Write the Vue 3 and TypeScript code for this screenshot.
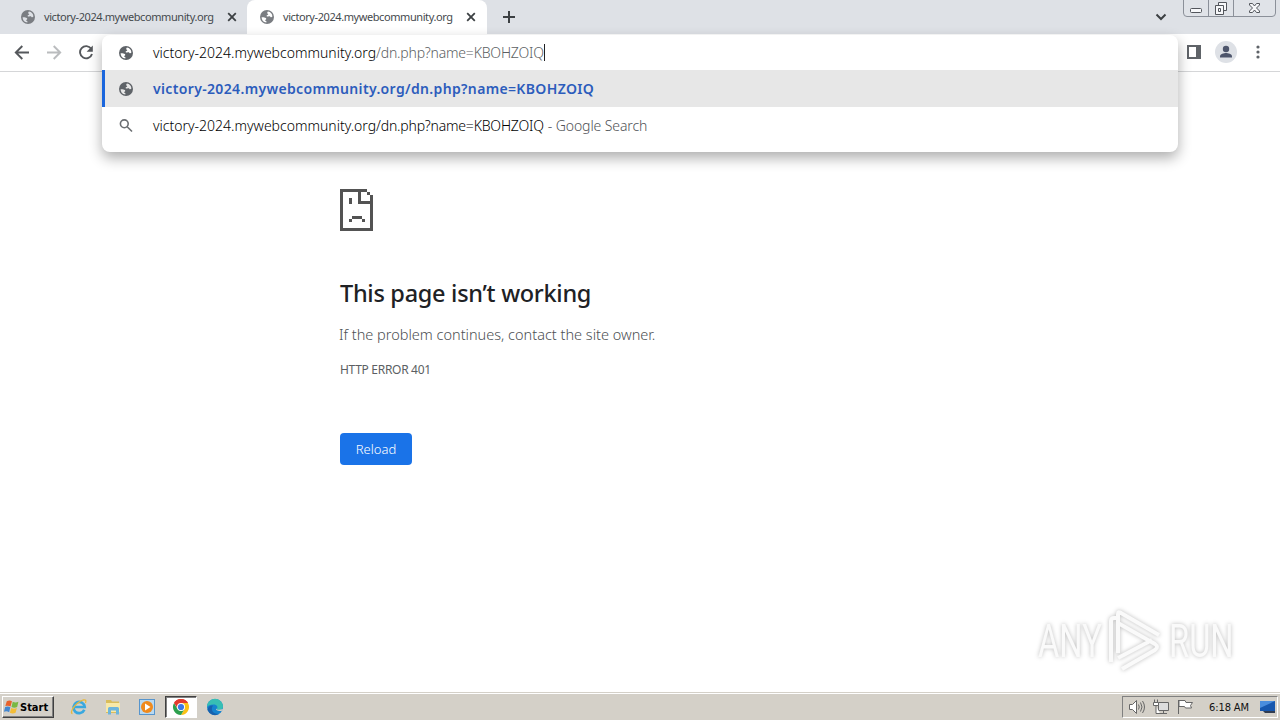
<script setup lang="ts">
interface Tab { title: string; active: boolean }
const tabs: Tab[] = [
  { title: 'victory-2024.mywebcommunity.org', active: false },
  { title: 'victory-2024.mywebcommunity.org', active: true },
]
const host = 'victory-2024.mywebcommunity.org'
const path = '/dn.php?name=KBOHZOIQ'
const globe =
  'M8 1a7 7 0 1 0 0 14A7 7 0 0 0 8 1zM2.6 8.2c1.6-.1 3.3 0 4.2.8.8.7.5 1.500-.2 1.700-.8.2-.4 1.100.3 1.300.8.2.7 1 .4 1.500A5.500 5.500 0 0 1 2.600 8.200zM9 2.600a5.500 5.500 0 0 1 4.400 5c-.8.9-1.700.8-2.100.1-.4-.8-1.300-.4-2.100-.2-1 .3-1.900-.2-1.500-1 .3-.7 1.200-.4 1.500-1.100.2-.6-1-.5-1-1.400 0-.6.4-1.100.8-1.400z'
</script>

<template>
  <div class="screen">
    <header class="tabs">
      <div v-for="(tab, i) in tabs" :key="i" class="tab" :class="{ active: tab.active }">
        <svg class="globe" viewBox="0 0 16 16"><path :d="globe" fill-rule="evenodd" /></svg>
        <span class="tab-title">{{ tab.title }}</span>
        <svg class="close" viewBox="0 0 10 10"><path d="M1.200 1.200l7.600 7.600M8.800 1.200L1.200 8.800" /></svg>
      </div>
      <svg class="plus" viewBox="0 0 12 12"><path d="M6 0v12M0 6h12" /></svg>
      <svg class="chevron" viewBox="0 0 12 8"><path d="M1.500 1.500L6 6l4.500-4.500" /></svg>
      <svg class="winctl" viewBox="0 0 94 18">
        <path class="frame" d="M.5 0v13q0 3.500 3.500 3.500h85q3.500 0 3.500-3.500V0M25.500 0v16.500M50.500 0v16.500" />
        <rect class="glyph" x="7.500" y="8.500" width="11" height="4" rx="1" />
        <path class="glyph" d="M35.500 5.500v-3h8v8h-3M32.500 5.500h8v9h-8zM35.500 8.500h2v3h-2z" />
        <path class="glyph" d="M66.500 3.500h3l2 2.500 2-2.500h3v1.500l-3 3 3 3v1.500h-3l-2-2.500-2 2.500h-3v-1.500l3-3-3-3z" />
      </svg>
    </header>

    <nav class="toolbar">
      <svg class="nav" viewBox="0 0 16 16"><path d="M15 7.500H2M8.300 1L1.800 7.500l6.500 6.500" /></svg>
      <svg class="nav off" viewBox="0 0 16 16"><path d="M1 7.500h13M7.700 1L14.200 7.500l-6.500 6.500" /></svg>
      <svg class="nav" viewBox="0 0 16 16">
        <path d="M13.200 3.800A6.100 6.100 0 1 0 14 9" /><path class="tip" d="M14.800.500v6.200H8.600z" />
      </svg>
      <div class="right">
        <svg class="panel" viewBox="0 0 14 14"><path fill-rule="evenodd" d="M0 0h14v14H0zM2 2v10h7V2z" /></svg>
        <svg class="avatar" viewBox="0 0 22 22">
          <circle cx="11" cy="11" r="11" fill="#dee1e6" />
          <circle cx="11" cy="8" r="3.200" fill="#4e566c" />
          <path d="M5 16.500v-1.300c0-2.200 4-3.200 6-3.200s6 1 6 3.200v1.300z" fill="#4e566c" />
        </svg>
        <svg class="dots" viewBox="0 0 4 14"><circle cx="2" cy="2" r="1.600" /><circle cx="2" cy="7" r="1.600" /><circle cx="2" cy="12" r="1.600" /></svg>
      </div>
    </nav>

    <main class="page">
      <svg class="sad" viewBox="0 0 33 42">
        <path d="M0 0h27v3H3v36h27V15H18V3h3v9h9V6h3v36H0zM27 3h3v3h-3zM9 9h3v6H9zM12 27h10v3H12zM9 30h3v3H9zM22 30h3v3h-3z" />
      </svg>
      <h1>This page isn’t working</h1>
      <p class="msg">If the problem continues, contact the site owner.</p>
      <p class="code">HTTP ERROR 401</p>
      <button class="reload">Reload</button>
    </main>

    <section class="omnibox">
      <div class="row input">
        <svg class="globe" viewBox="0 0 16 16"><path :d="globe" fill-rule="evenodd" /></svg>
        <span class="url">{{ host }}<span class="dim">{{ path }}</span></span><i class="caret"></i>
      </div>
      <div class="row selected">
        <svg class="globe" viewBox="0 0 16 16"><path :d="globe" fill-rule="evenodd" /></svg>
        <span class="url bold">{{ host }}{{ path }}</span>
      </div>
      <div class="row search">
        <svg class="globe lens" viewBox="0 0 16 16"><circle cx="6.300" cy="5.800" r="3.900" /><path d="M9.200 8.700l4.800 4.800" /></svg>
        <span class="url">{{ host }}<span class="tail">{{ path }}</span></span><span class="suffix">- Google Search</span>
      </div>
    </section>

    <div class="watermark">
      <span class="any">ANY</span>
      <svg class="play" viewBox="0 0 58 64">
        <path d="M4 53V12q0-3 3-3h2M11 44V5q0-3 3-1l38 22M11 14l37 21q4 3 0 6L15 60M11 49l34-18" />
      </svg>
      <span class="run">RUN</span>
    </div>

    <footer class="taskbar">
      <div class="start">
        <svg viewBox="0 0 18 16">
          <path d="M4 2q3-2 5.500 0L8 7.500Q5.500 6 2.500 7z" fill="#e8622c" />
          <path d="M10.300 2.500q3 1.700 6 0L15 8q-3 1.600-6 0z" fill="#79b844" />
          <path d="M2.300 8q3-1.400 5.500.300L6.500 13.500Q4 12 1 13z" fill="#4387d0" />
          <path d="M8.700 9q3 1.500 6 0l-1.400 5q-3 1.600-6 0z" fill="#f3bd37" />
        </svg>
        <b>Start</b>
      </div>
      <div class="apps">
        <span class="app">
          <svg viewBox="0 0 18 18">
            <path d="M14.300 11.700A5.600 5.600 0 1 1 14.700 9H5" fill="none" stroke="#39a8df" stroke-width="2.700" />
            <path d="M2.500 15.500C-1 15 5 5 13 2q4-1 2.500 3" fill="none" stroke="#e7b83c" stroke-width="1.300" />
          </svg>
        </span>
        <span class="app">
          <svg viewBox="0 0 18 18">
            <path d="M2 2h5l1 1.500h7V15H2z" fill="#d9bd5c" /><path d="M2 5h14v9H2z" fill="#f8e9a8" />
            <path d="M4 16.500v-6q0-1.500 1.500-1.500h8q1.500 0 1.500 1.500v6h-3v-4H7v4z" fill="#6db5dc" />
          </svg>
        </span>
        <span class="app">
          <svg viewBox="0 0 18 18">
            <rect x="1.500" y="1.500" width="15" height="15" fill="#b9d9f1" stroke="#5795cd" />
            <circle cx="9" cy="9" r="6" fill="#f08a1d" /><path d="M7 5.500v7L12.500 9z" fill="#fff" />
          </svg>
        </span>
        <span class="app pressed">
          <svg viewBox="0 0 18 18">
            <path d="M9 9L2.070 5A8 8 0 0 1 15.930 5z" fill="#e33b2e" />
            <path d="M9 9V1l6.930 4A8 8 0 0 1 9 17l3.500-6z" fill="#fbc116" />
            <path d="M9 9l3.500 2L9 17A8 8 0 0 1 2.070 5l3.500 6z" fill="#2da04e" />
            <path d="M9 5h6.930A8 8 0 0 0 2.070 5L6 11z" fill="#e33b2e" />
            <circle cx="9" cy="9" r="4" fill="#fff" /><circle cx="9" cy="9" r="3.100" fill="#3b78e7" />
          </svg>
        </span>
        <span class="app">
          <svg viewBox="0 0 18 18">
            <circle cx="9" cy="9" r="8" fill="#1583cf" />
            <path d="M1 9a8 8 0 0 1 16-.500c0 3-3.500 4-6.500 3 2-2.500.5-5-3-5C4 6.500 2 7.500 1 9z" fill="#37bfb4" />
            <path d="M7 7.500c-3 4 0 9 6 8.500A8 8 0 0 1 1.500 12C2 9 4 7 7 7.500z" fill="#1761ad" />
            <path d="M10 10.500c-.5 2 2.500 3 6 2.300L17.200 11l-4 .8c-1.500.2-2.500-.3-3.200-1.300z" fill="#d4d0c8" />
          </svg>
        </span>
      </div>
      <div class="tray">
        <svg viewBox="0 0 18 16" class="line">
          <path d="M.5 5.500h3l4-4v13l-4-4h-3z" fill="#fff" /><path d="M9.500 5.500q1.500 2.500 0 5M11.500 3.500q3 4.500 0 9M13.500 2q4 6 0 12" />
        </svg>
        <svg viewBox="0 0 18 16" class="line">
          <path d="M5.500 3.500h10v8h-10zM7 14.500h7M10.500 12v2" fill="#ddd" /><path d="M.5 3.500h5v3h-5zM1.500 3V.500M4.500 3V.500M3 7v7.500h4" fill="#fff" />
        </svg>
        <svg viewBox="0 0 18 16" class="line">
          <path d="M1.500 15V1M2 1.500h6l1 2h6.500l-2 3 1 2.500H8.500L7.500 7.500H2z" fill="#fff" />
        </svg>
        <time>6:18 AM</time>
        <svg viewBox="0 0 18 16" class="monitor">
          <path d="M1 2h15v10H1z" fill="#1757ae" /><path d="M1 2h15L1 9z" fill="#4a8ddd" /><path d="M4 12h12v2H6z" fill="#303c50" />
        </svg>
      </div>
    </footer>
  </div>
</template>

<style>
body { margin: 0; overflow: hidden; }
</style>

<style scoped>
.screen { position: relative; width: 1280px; height: 720px; display: flex; flex-direction: column; background: #fff; font-family: "Noto Sans", "Open Sans", sans-serif; overflow: hidden; }
svg { display: block; flex: none; }
.tabs { height: 34px; flex: none; background: #dee1e6; display: flex; align-items: center; }
.tab { box-sizing: border-box; height: 34px; display: flex; align-items: center; width: 239px; padding: 0 0 0 12px; border-radius: 8px 8px 0 0; }
.tab:first-child { width: 247px; padding-left: 20px; }
.tab.active { background: #fff; width: 240px; }
.globe { width: 16px; height: 16px; fill: #5f6368; }
.tab .globe { fill: #7a7d82; }
.tab-title { width: 176px; margin-left: 8px; margin-top: -2px; font-size: 11px; letter-spacing: -0.42px; color: #45494d; white-space: nowrap; }
.close { width: 10px; height: 10px; margin-left: 7px; stroke: #3c4043; stroke-width: 1.8; }
.plus { width: 12px; height: 12px; margin-left: 16px; stroke: #3c4043; stroke-width: 2; }
.chevron { width: 12px; height: 8px; margin-left: 640px; fill: none; stroke: #3c4043; stroke-width: 2; }
.winctl { width: 94px; height: 18px; margin: 0 3px 0 auto; align-self: flex-start; fill: none; }
.frame { stroke: #8b9099; fill: #e0e3e8; }
.glyph { stroke: #53565c; fill: #f7f8fa; }
.toolbar { box-sizing: border-box; height: 38px; flex: none; display: flex; align-items: center; gap: 16px; padding-left: 14px; border-bottom: 1px solid #d5d6d8; }
.nav { width: 16px; height: 16px; fill: none; stroke: #55585c; stroke-width: 1.9; }
.nav.off { stroke: #babcbe; }
.tip { fill: #55585c; stroke: none; }
.right { display: flex; align-items: center; margin-left: auto; padding-right: 20px; margin-top: -1px; }
.panel { width: 14px; height: 14px; fill: #5f6368; }
.avatar { width: 22px; height: 22px; margin-left: 14px; }
.dots { width: 4px; height: 14px; margin-left: 19px; fill: #5f6368; }
.page { flex: 1; padding: 117px 0 0 340px; color: #5c5f63; }
.sad { width: 33px; height: 42px; fill: #535353; }
h1 { margin: 45px 0 0; font-size: 23.500px; line-height: 34px; font-weight: 500; color: #202124; letter-spacing: -0.29px; white-space: nowrap; }
.msg { margin: 14px 0 0 -1px; font-size: 14.500px; line-height: 20px; font-weight: 300; letter-spacing: 0; color: #4c4f53; white-space: nowrap; }
.code { margin: 16px 0 0; font-size: 12px; line-height: 20px; letter-spacing: -0.3px; }
.reload { display: block; margin: 53px 0 0; width: 72px; height: 32px; padding: 0; border: 0; border-radius: 4px; background: #1a73e8; color: #fff; font: 300 13px "Noto Sans", sans-serif; }
.omnibox { position: absolute; left: 102px; top: 35px; width: 1076px; height: 117px; border-radius: 8px; background: #fff; box-shadow: 0 6px 14px rgba(0,0,0,.32); overflow: hidden; }
.row { display: flex; align-items: center; box-sizing: border-box; height: 37px; padding-left: 16px; font-size: 14px; white-space: nowrap; color: #000; }
.row.input { height: 35px; }
.row.selected { background: #e7e7e7; padding-left: 13px; border-left: 3px solid #1a66dd; }
.url { margin-left: 19px; font-weight: 300; }
.dim { color: #5c5f63; }
.dim, .tail { letter-spacing: -0.2px; }
.url.bold { color: #2c5cbc; font-weight: 600; letter-spacing: 0.35px; }
.suffix { margin-left: 4px; color: #505357; font-weight: 300; letter-spacing: -0.1px; }
.caret { width: 1px; height: 17px; background: #202124; }
.lens { fill: none; stroke: #6b6e72; stroke-width: 1.6; }
.watermark { position: absolute; left: 1038px; top: 609px; height: 64px; display: flex; align-items: center; color: #fafafa; filter: drop-shadow(0 0 2px #bbb); font-family: Roboto, sans-serif; font-size: 46px; }
.any, .run { width: 64px; transform: scaleX(.71); transform-origin: left; }
.play { width: 58px; height: 64px; margin-left: 5px; margin-right: 4px; fill: none; stroke: #fafafa; stroke-width: 4; stroke-linejoin: round; }
.taskbar { height: 28px; box-sizing: border-box; flex: none; display: flex; align-items: center; padding: 2px 0 1px 2px; border-top: 1px solid #d4d0c8; background: #d4d0c8; box-shadow: inset 0 1px #fff; }
.start { box-sizing: border-box; width: 52px; height: 22px; display: flex; align-items: center; border: 1px solid; border-color: #fff #404040 #404040 #fff; box-shadow: inset -1px -1px #808080; font-family: "DejaVu Sans Condensed", "Liberation Sans", sans-serif; font-size: 11px; }
.start svg { width: 17px; height: 16px; }
.start b { letter-spacing: 0; color: #000; }
.apps { display: flex; margin-left: 9px; }
.app { box-sizing: border-box; width: 32px; height: 22px; margin-right: 2px; display: grid; place-items: center; border: 1px solid transparent; }
.app svg { width: 18px; height: 18px; }
.pressed { background: #fff; border-color: #404040 #fff #fff #404040; box-shadow: inset 1px 1px #808080; }
.tray { box-sizing: border-box; width: 156px; height: 22px; margin-left: auto; margin-right: 2px; display: flex; align-items: center; padding-left: 6px; border: 1px solid; border-color: #808080 #fff #fff #808080; font-family: "DejaVu Sans Condensed", sans-serif; }
.tray svg { width: 18px; height: 16px; margin-right: 6px; }
.line { fill: none; stroke: #666; stroke-width: 1; }
.tray time { flex: none; width: 44px; margin-left: 8px; margin-right: 6px; font-size: 11px; letter-spacing: -0.1px; color: #111; white-space: nowrap; }
.tray .monitor { margin: 0; }
</style>
